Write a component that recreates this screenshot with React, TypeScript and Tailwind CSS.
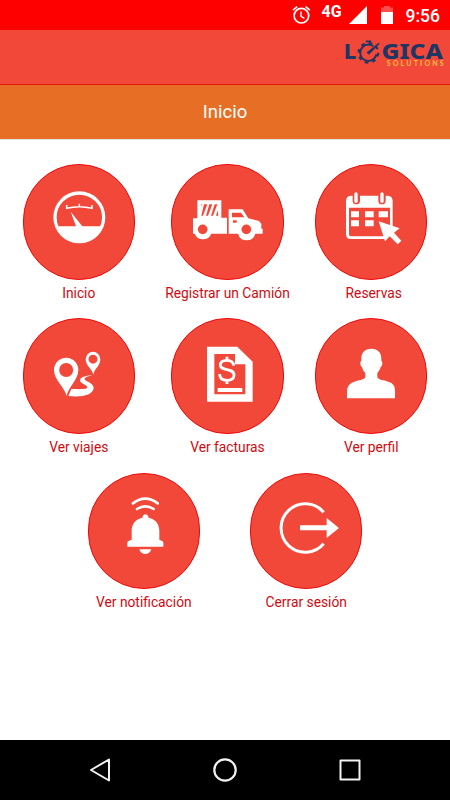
import type { ReactNode } from "react";

type TileProps = {
  label: string;
  viewBox: string;
  className?: string;
  labelClass?: string;
  children: ReactNode;
};

function Tile({ label, viewBox, className = "", labelClass = "", children }: TileProps) {
  return (
    <button className={`flex w-[112.5px] shrink-0 flex-col items-center ${className}`}>
      <span className="block h-[116px] w-[112.5px] overflow-hidden rounded-[56px] border border-[#ee0a0a] bg-[#f1483a]">
        <svg viewBox={viewBox} className="-m-px h-[116px] w-[112.5px]" fill="#fff">
          {children}
        </svg>
      </span>
      <span className={`mt-1 text-[13.8px] leading-[18px] whitespace-nowrap text-[#cf0a10] ${labelClass}`}>
        {label}
      </span>
    </button>
  );
}

function StatusBar() {
  return (
    <div className="flex h-[30px] items-center bg-[#ff0000] pl-[292px] text-white">
      <svg width="19" height="20" viewBox="0 0 19 20" fill="none" stroke="#fff" strokeWidth="1.7">
        <circle cx="9.4" cy="10.7" r="7.3" />
        <path d="M1 5.2 5.2 1.7M17.8 5.2 13.6 1.7" />
        <path d="M9 6.6v4.7l3.4 2.1" strokeWidth="1.4" />
      </svg>
      <span className="mb-[7px] ml-[10.5px] w-[21.5px] text-[16px] leading-4 font-bold whitespace-nowrap">4G</span>
      <svg className="ml-[6px]" width="18" height="18" viewBox="0 0 18 18" fill="#fff">
        <path d="M18 0v18H0z" />
      </svg>
      <svg className="ml-[14px]" width="12" height="18" viewBox="0 0 12 18" fill="#fff">
        <path d="M3 0h6v1.5h3V6H0V1.5h3z" opacity=".3" />
        <path d="M0 6h12v12H0z" />
      </svg>
      <span className="ml-[12.5px] pt-px text-[17.5px] leading-[30px] font-medium">9:56</span>
    </div>
  );
}

function Logo() {
  return (
    <svg width="106" height="54" viewBox="0 0 106 54" fill="#1d3764">
      <text x="-0.3" y="29" fontSize="22" fontWeight="800" fontFamily="Noto Sans, sans-serif" textLength="12.5" lengthAdjust="spacingAndGlyphs">
        L
      </text>
      {/* Gear standing in for the O */}
      <circle cx="24.4" cy="22.8" r="8.2" fill="none" stroke="#1d3764" strokeWidth="2" strokeDasharray="42 9.5" strokeDashoffset="-1.5" />
      <circle cx="24.4" cy="22.8" r="9.8" fill="none" stroke="#1d3764" strokeWidth="2.2" strokeDasharray="3.6 4.1" />
      <path d="M21.7 12.2h5.4V10.5h-5.4zM22.5 22.4 34.6 12.8l1 1-10.6 11z" />
      <text x="37.4" y="29" fontSize="22" fontWeight="800" fontFamily="Noto Sans, sans-serif" textLength="61.5" lengthAdjust="spacingAndGlyphs">
        GICA
      </text>
      <text x="42.7" y="36" fontSize="7" fontWeight="900" fill="#f5b63a" fontFamily="Lato, sans-serif" textLength="57">
        SOLUTIONS
      </text>
    </svg>
  );
}

export default function App() {
  return (
    <div className="flex h-[800px] w-[450px] flex-col overflow-hidden bg-white font-[Roboto,sans-serif]">
      <StatusBar />

      {/* Brand bar */}
      <header className="flex h-[55px] justify-end border-b border-[#e3170f] bg-[#f1483a]">
        <Logo />
      </header>

      <div className="flex h-[54px] items-center justify-center bg-[#e66e25] pt-px text-[18.5px] text-white">
        <h1>Inicio</h1>
      </div>

      <main className="flex-1 border-t border-[#e2e2e2] pt-6">
        <div className="flex h-[153.5px] pl-[22.5px]">
          <Tile label="Inicio" viewBox="23 26 337.5 348">
            <circle cx="192" cy="186" r="73" fill="none" stroke="#fff" strokeWidth="10" />
            <path d="M128 213H182L166 169 201 213H256A66 66 0 0 1 128 213z" />
            <path
              d="M154 149v10Q192 149 230 159V149M192 145v9"
              fill="none"
              stroke="#fff"
              strokeWidth="4.5"
            />
          </Tile>
          <Tile label="Registrar un Camión" viewBox="34 26 337.5 348" className="ml-[36.2px]">
            <path
              fillRule="evenodd"
              d="M113 135H185V187H202V235H155A27 27 0 0 1 105 235H100V189H113zM124 147V153L127 147zM133 147 125 181H130L143 147zM149 147 139 181H145L158 147zM165 147 154 181H160L173 147zM174 165 169 181H176z"
            />
            <path
              fillRule="evenodd"
              d="M207 162H249L266 189 298 197 305 205V220H309V235H287A27 27 0 0 1 235 235H207zM217 172V186H254L244 172zM220 195V202H231V195z"
            />
            <circle cx="129" cy="222" r="26" />
            <circle cx="260" cy="222" r="26" />
            <circle cx="129" cy="222" r="14.5" fill="#f1483a" />
            <circle cx="260" cy="222" r="14.5" fill="#f1483a" />
          </Tile>
          <Tile label="Reservas" viewBox="30 26 337.5 348" className="ml-[31.3px]" labelClass="pl-[5px]">
            <path
              fillRule="evenodd"
              d="M137 121H143V136A11 11 0 0 0 165 136V121H220V136A11 11 0 0 0 242 136V121H248Q263 122 263 137V216L255 210V157H132V235Q132 243 140 243H237L244 251H137Q123 251 123 237V137Q123 122 137 121z"
            />
            <rect x="148" y="111" width="10" height="32" rx="5" />
            <rect x="226" y="111" width="10" height="32" rx="5" />
            <path d="M138 168h24v18h-24zM180 168h26v18h-26zM221 168h28v18h-28zM138 195h24v18h-24zM180 195h26v18h-26z" />
            <path d="M221 198 284 219 267 232 289 256 278 267 254 243 240 258z" />
          </Tile>
        </div>

        <div className="flex h-[155px] pl-[22.5px]">
          <Tile label="Ver viajes" viewBox="23 22 337.5 348">
            <path
              fillRule="evenodd"
              d="M154 256C148 230 116 208 116 178A36.5 37 0 0 1 189 178C189 208 158 230 154 256zM152.5 157A21 21 0 1 0 152.5 199 21 21 0 1 0 152.5 157z"
            />
            <path
              fillRule="evenodd"
              d="M234 192C230 174 211 166 211 146A22 23 0 0 1 255 146C255 166 237 174 234 192zM233 132A13.5 13.5 0 1 0 233 159 13.5 13.5 0 1 0 233 132z"
            />
            <path d="M231 193C210 195 194 200 194 209 194 219 215 222 216 230 215 236 200 236 168 235L159 256C198 260 233 254 235 232 236 216 207 212 208 205 209 198 222 197 231 193z" />
          </Tile>
          <Tile label="Ver facturas" viewBox="34 22 337.5 348" className="ml-[36.2px]">
            <path fillRule="evenodd" d="M142 108H233L279 153V273H142zM164 130V251H257V161H226V130z" />
            <path d="M174 232h74v12h-74z" />
            <path
              d="M222 165C221 153 213 149 202 149 190 149 182 154 182 163 182 183 223 170 223 193 223 204 214 209 202 209 188 209 180 202 180 190M202 138V149M202 209V220"
              fill="none"
              stroke="#fff"
              strokeWidth="8.5"
            />
          </Tile>
          <Tile label="Ver perfil" viewBox="30 22 337.5 348" className="ml-[31.3px]">
            <path d="M199 114C218 114 229 125 229 144V150C234 153 232 166 227 169 225 177 221 183 217 187V200C221 208 236 208 254 215 268 221 270 230 270 243V263H126V243C127 230 130 221 144 215 161 208 177 208 181 200V187C176 183 173 177 171 169 166 166 164 153 169 150V144C169 125 180 114 199 114z" />
          </Tile>
        </div>

        <div className="flex pl-[87.6px]">
          <Tile label="Ver notificación" viewBox="23 22 337.5 348">
            <path
              d="M158 113Q195 85 232 113M170 130Q195 114 220 130"
              fill="none"
              stroke="#fff"
              strokeWidth="8"
              strokeLinecap="round"
            />
            <path d="M195 146C201 146 204 150 205 156 226 160 237 175 237 196V222L247 227Q250 229 249 243H141Q140 229 143 227L154 222V196C154 175 165 160 186 156 187 150 190 146 195 146zM177 251H213C209 270 181 270 177 251z" />
          </Tile>
          <Tile label="Cerrar sesión" viewBox="30 22 337.5 348" className="ml-[49.9px]">
            <path d="M251 140A72.5 72.5 0 1 0 251 234" fill="none" stroke="#fff" strokeWidth="9" />
            <path d="M180 179h80v-22l37 30-37 30v-23h-80z" />
          </Tile>
        </div>
      </main>

      <nav className="flex h-[60px] items-center bg-black">
        <svg className="ml-[89px]" width="22" height="26" viewBox="0 0 22 26" fill="none" stroke="#f2f2f2" strokeWidth="2" strokeLinejoin="round">
          <path d="M20 2.5V23.5L2 13z" />
        </svg>
        <svg className="ml-[101px]" width="26" height="26" viewBox="0 0 26 26" fill="none" stroke="#f2f2f2" strokeWidth="2.2">
          <circle cx="13" cy="13" r="10.7" />
        </svg>
        <svg className="ml-[100px]" width="24" height="24" viewBox="0 0 24 24" fill="none" stroke="#f2f2f2" strokeWidth="2" strokeLinejoin="round">
          <rect x="2.5" y="2.5" width="19" height="19" />
        </svg>
      </nav>
    </div>
  );
}
